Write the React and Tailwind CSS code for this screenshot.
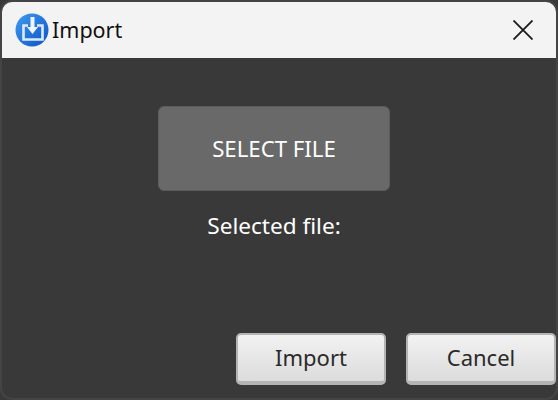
const FONT = "font-['Noto_Sans','Open_Sans',sans-serif]";

const dialogBtn =
  "w-[150px] h-[52px] rounded-[5px] border-2 border-b-[4px] border-[#b4b4b4] bg-gradient-to-b from-[#f2f2f2] to-[#dcdcdc] text-[#2a2a2a] text-[22px] leading-none pb-[2px] flex items-center justify-center";

function AppIcon() {
  return (
    <svg width="34" height="34" viewBox="0 0 34 34" className="shrink-0">
      <defs>
        <linearGradient id="ball" x1="0" y1="0" x2="1" y2="1">
          <stop offset="0" stopColor="#3f9cf0" />
          <stop offset="1" stopColor="#0c52c4" />
        </linearGradient>
      </defs>
      <circle cx="17" cy="17" r="16.5" fill="url(#ball)" />
      <path d="M13 12.5H8.5V26.5H27.5V12.5H22" fill="none" stroke="#dcebfb" strokeWidth="2.6" />
      <path d="M15.5 4H19.5V14H23L17.5 21L12 14H15.5Z" fill="#eef5fd" />
    </svg>
  );
}

export default function App() {
  return (
    <div className={`w-[558px] h-[400px] overflow-hidden bg-[#393939] ${FONT}`}>
      <div className="h-full rounded-[12px] border-2 border-[#444444] flex flex-col">
        <div className="h-[56px] shrink-0 bg-[#f3f3f3] rounded-t-[10px] flex items-center pl-[13px] pr-[23px]">
          <AppIcon />
          <span className="ml-[3px] text-[21.5px] leading-none text-[#111]">Import</span>
          <svg width="20" height="20" viewBox="0 0 20 20" className="ml-auto">
            <path d="M0.5 0.5L19.5 19.5M19.5 0.5L0.5 19.5" stroke="#1a1a1a" strokeWidth="1.8" fill="none" />
          </svg>
        </div>
        <div className="flex-1 flex flex-col items-center pt-[48px] pr-[10px]">
          <div className="w-[232px] h-[85px] rounded-[6px] bg-[#696969] border border-[#5c5c5c] text-white text-[22.2px] flex items-center justify-center">
            SELECT FILE
          </div>
          <p className="mt-[20px] text-white text-[22.6px] leading-[30px]">Selected file:</p>
        </div>
        <div className="flex justify-end gap-[20px] pb-[13px]">
          <button className={dialogBtn}>Import</button>
          <button className={dialogBtn}>Cancel</button>
        </div>
      </div>
    </div>
  );
}
